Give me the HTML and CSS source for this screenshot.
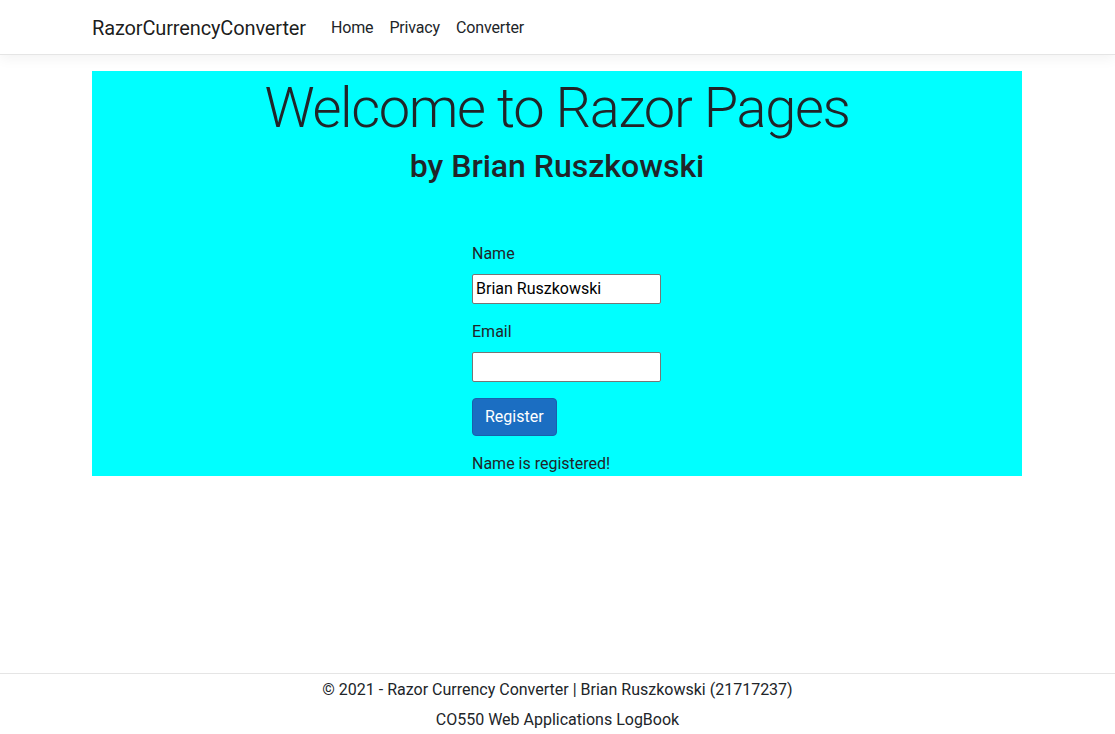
FILE: index.html
```html
<!DOCTYPE html>
<html lang="en">
<head>
<meta charset="utf-8">
<title>RazorCurrencyConverter</title>
<link rel="stylesheet" href="styles.css">
</head>
<body>
<header class="navbar">
  <div class="container nav-inner">
    <a class="brand" href="#">RazorCurrencyConverter</a>
    <nav class="nav-links">
      <a class="nav-link" href="#">Home</a>
      <a class="nav-link" href="#">Privacy</a>
      <a class="nav-link" href="#">Converter</a>
    </nav>
  </div>
</header>
<div class="container main">
  <main class="hero">
    <h1 class="display">Welcome to Razor Pages</h1>
    <h2 class="byline">by Brian Ruszkowski</h2>
    <form class="reg-form">
      <div class="form-group">
        <label class="label" for="name">Name</label>
        <input class="field" id="name" type="text" value="Brian Ruszkowski">
      </div>
      <div class="form-group">
        <label class="label" for="email">Email</label>
        <input class="field" id="email" type="text" value="">
      </div>
      <div class="form-group">
        <button class="btn" type="button">Register</button>
      </div>
      <div class="status">Name is registered!</div>
    </form>
  </main>
</div>
<footer class="footer">
  <div class="footer-line">© 2021 - Razor Currency Converter | Brian Ruszkowski (21717237)</div>
  <div class="footer-line">CO550 Web Applications LogBook</div>
</footer>
</body>
</html>
```

FILE: styles.css
```css
html, body {
  margin: 0;
  padding: 0;
}
body {
  font-family: Roboto, "Open Sans", sans-serif;
  font-size: 16px;
  line-height: 1.5;
  color: #212529;
  background: #fff;
  min-height: 100vh;
  display: flex;
  flex-direction: column;
}
.container {
  width: 930px;
  margin-left: calc((100% - 931px) / 2);
}
.navbar {
  border-bottom: 1px solid #e5e5e5;
  box-shadow: 0 4px 12px rgba(0, 0, 0, 0.05);
  padding: 8px 0;
  height: 38px;
  display: flex;
  align-items: center;
}
.nav-inner {
  display: flex;
  align-items: center;
  padding-top: 1px;
}
.brand {
  font-size: 20px;
  color: rgba(0, 0, 0, 0.9);
  text-decoration: none;
  margin-right: 17px;
  line-height: 30px;
  letter-spacing: -0.14px;
}
.nav-links {
  display: flex;
}
.nav-link {
  color: #212529;
  text-decoration: none;
  padding: 8px;
  letter-spacing: -0.15px;
}
.main {
  margin-top: 16px;
  flex: 1;
}
.hero {
  background: #00ffff;
  text-align: center;
}
.display {
  font-size: 56px;
  font-weight: 300;
  line-height: 1.2;
  letter-spacing: -1.35px;
  padding-top: 4px;
  margin: 0 0 4px;
}
.byline {
  font-size: 32px;
  font-weight: 500;
  line-height: 1.2;
  padding-top: 1px;
  margin: 0 0 7px;
}
.reg-form {
  text-align: left;
  margin: 0 0 0 380px;
  padding-top: 49px;
}
.form-group {
  margin-bottom: 16px;
}
.label {
  display: block;
  margin-bottom: 8px;
}
.field {
  display: block;
  box-sizing: border-box;
  width: 189px;
  height: 30px;
  font: inherit;
  color: #000;
  padding: 2px 3px;
  border: 1px solid #767676;
  border-radius: 2px;
  background: #fff;
  margin: 0;
}
.btn {
  font: inherit;
  color: #fff;
  background: #1b6ec2;
  border: 1px solid #1861ac;
  border-radius: 4px;
  padding: 6px 12px;
  line-height: 1.5;
}
.status {
  line-height: 24px;
}
.footer {
  border-top: 1px solid #e5e5e5;
  text-align: center;
  color: #212529;
  padding-top: 1px;
  box-sizing: border-box;
  height: 61px;
}
.footer-line {
  line-height: 30px;
}
```
